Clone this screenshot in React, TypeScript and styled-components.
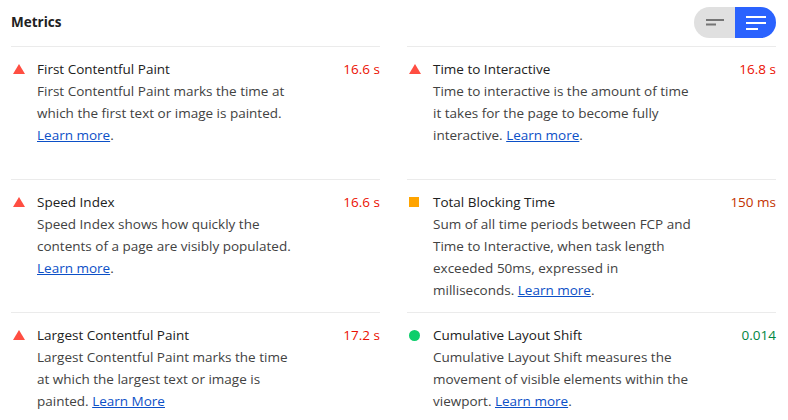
import React from "react";
import styled, { createGlobalStyle } from "styled-components";

const Global = createGlobalStyle`
  html, body { margin: 0; padding: 0; background: #fff; }
  body { font-family: "Open Sans", "Noto Sans", sans-serif; font-size: 13.5px; color: #212121; }
`;

const Page = styled.div`
  padding: 0 12px 0 11px;
`;

const Header = styled.header`
  height: 46px;
  display: flex;
  align-items: center;
  justify-content: space-between;
`;

const Title = styled.h2`
  margin: 0;
  font-size: 13.5px;
  font-weight: 700;
  color: #212121;
  line-height: 20px;
  padding-bottom: 3px;
`;

const Toggle = styled.div`
  display: flex;
  height: 31px;
  border-radius: 16px;
  overflow: hidden;
  margin-bottom: 1px;
`;

const ToggleBtn = styled.button<{ $active?: boolean }>`
  width: 41px;
  height: 31px;
  border: 0;
  padding: 0;
  display: flex;
  align-items: center;
  justify-content: center;
  background: ${(p) => (p.$active ? "#2a62fe" : "#e0e0e0")};
  cursor: pointer;
`;

const Grid = styled.div`
  display: grid;
  grid-template-columns: 1fr 1fr;
  grid-auto-rows: 1fr;
  column-gap: 27px;
`;

const Item = styled.div`
  border-top: 1px solid #ebebeb;
  padding: 11px 0;
`;

const TitleRow = styled.div`
  display: flex;
  align-items: center;
  height: 22px;
`;

const IconCell = styled.div`
  width: 26px;
  display: flex;
  align-items: center;
  padding-left: 2px;
  box-sizing: border-box;
`;

const Name = styled.span`
  flex: 1;
  line-height: 22px;
  color: #212121;
`;

const Value = styled.span<{ $color: string }>`
  line-height: 22px;
  color: ${(p) => p.$color};
`;

const Desc = styled.div`
  padding-left: 26px;
  color: #424242;
  line-height: 22px;
`;

const Line = styled.span`
  display: block;
  white-space: nowrap;
`;

const Link = styled.a`
  color: #0c50c7;
  text-decoration: underline;
`;

const Triangle = styled.span`
  width: 0;
  height: 0;
  border-left: 6px solid transparent;
  border-right: 6px solid transparent;
  border-bottom: 10px solid #ff4e42;
`;

const Square = styled.span`
  width: 10px;
  height: 10px;
  background: #ffa400;
`;

const Circle = styled.span`
  width: 11px;
  height: 11px;
  border-radius: 50%;
  background: #0cce6b;
`;

type Kind = "fail" | "average" | "pass";

const colors: Record<Kind, string> = {
  fail: "#eb0f00",
  average: "#c33300",
  pass: "#018642",
};

type Metric = {
  name: string;
  value: string;
  kind: Kind;
  lines: string[];
  lead: string;
  link: string;
  dot: boolean;
};

const metrics: Metric[] = [
  {
    name: "First Contentful Paint",
    value: "16.6 s",
    kind: "fail",
    lines: ["First Contentful Paint marks the time at", "which the first text or image is painted."],
    lead: "",
    link: "Learn more",
    dot: true,
  },
  {
    name: "Time to Interactive",
    value: "16.8 s",
    kind: "fail",
    lines: ["Time to interactive is the amount of time", "it takes for the page to become fully"],
    lead: "interactive. ",
    link: "Learn more",
    dot: true,
  },
  {
    name: "Speed Index",
    value: "16.6 s",
    kind: "fail",
    lines: ["Speed Index shows how quickly the", "contents of a page are visibly populated."],
    lead: "",
    link: "Learn more",
    dot: true,
  },
  {
    name: "Total Blocking Time",
    value: "150 ms",
    kind: "average",
    lines: [
      "Sum of all time periods between FCP and",
      "Time to Interactive, when task length",
      "exceeded 50ms, expressed in",
    ],
    lead: "milliseconds. ",
    link: "Learn more",
    dot: true,
  },
  {
    name: "Largest Contentful Paint",
    value: "17.2 s",
    kind: "fail",
    lines: ["Largest Contentful Paint marks the time", "at which the largest text or image is"],
    lead: "painted. ",
    link: "Learn More",
    dot: false,
  },
  {
    name: "Cumulative Layout Shift",
    value: "0.014",
    kind: "pass",
    lines: ["Cumulative Layout Shift measures the", "movement of visible elements within the"],
    lead: "viewport. ",
    link: "Learn more",
    dot: true,
  },
];

const Icon = ({ kind }: { kind: Kind }) =>
  kind === "fail" ? <Triangle /> : kind === "average" ? <Square /> : <Circle />;

export default function App() {
  return (
    <Page>
      <Global />
      <Header>
        <Title>Metrics</Title>
        <Toggle>
          <ToggleBtn aria-label="Compact view">
            <svg width="18" height="8" viewBox="0 0 18 8">
              <rect x="0" y="0" width="18" height="2" fill="#757575" />
              <rect x="0" y="4.5" width="10" height="2" fill="#757575" />
            </svg>
          </ToggleBtn>
          <ToggleBtn $active aria-label="Expanded view">
            <svg width="20" height="14" viewBox="0 0 20 14">
              <rect x="0" y="0" width="20" height="2" fill="#fff" />
              <rect x="0" y="6" width="20" height="2" fill="#fff" />
              <rect x="0" y="12" width="12" height="2" fill="#fff" />
            </svg>
          </ToggleBtn>
        </Toggle>
      </Header>
      <Grid>
        {metrics.map((m) => (
          <Item key={m.name}>
            <TitleRow>
              <IconCell>
                <Icon kind={m.kind} />
              </IconCell>
              <Name>{m.name}</Name>
              <Value $color={colors[m.kind]}>{m.value}</Value>
            </TitleRow>
            <Desc>
              {m.lines.map((l) => (
                <Line key={l}>{l}</Line>
              ))}
              <Line>
                {m.lead}
                <Link href="#">{m.link}</Link>
                {m.dot ? "." : ""}
              </Line>
            </Desc>
          </Item>
        ))}
      </Grid>
    </Page>
  );
}
